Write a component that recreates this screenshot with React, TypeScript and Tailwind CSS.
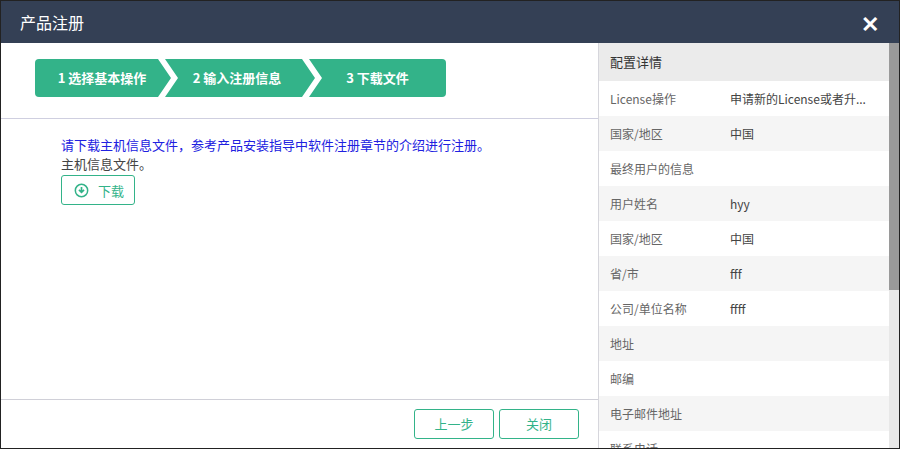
import React from "react";

const rows: [string, string][] = [
  ["License操作", "申请新的License或者升..."],
  ["国家/地区", "中国"],
  ["最终用户的信息", ""],
  ["用户姓名", "hyy"],
  ["国家/地区", "中国"],
  ["省/市", "fff"],
  ["公司/单位名称", "ffff"],
  ["地址", ""],
  ["邮编", ""],
  ["电子邮件地址", ""],
  ["联系电话", ""],
];

const Chevron = ({ left }: { left: number }) => (
  <svg className="absolute top-0" style={{ left }} width="26" height="38" viewBox="0 0 26 38">
    <polygon points="0,0 7,0 20,19 7,38 0,38 13,19" fill="white" />
  </svg>
);

export default function App() {
  return (
    <div
      className="w-[900px] h-[449px] border border-[#222] bg-white flex flex-col overflow-hidden"
      style={{ fontFamily: '"Microsoft YaHei","Noto Sans CJK SC",sans-serif' }}
    >
      <div className="h-[42px] bg-[#344055] flex items-center justify-between pl-[19px] pr-[20px] shrink-0">
        <span className="text-white text-[16px]">产品注册</span>
        <span className="text-white text-[22px] font-bold leading-none">✕</span>
      </div>
      <div className="flex flex-1 min-h-0">
        <div className="w-[598px] border-r border-[#d6d6dc] flex flex-col">
          <div className="h-[76px] border-b border-[#cfcfe0] pt-[16px] pl-[34px]">
            <div className="relative w-[411px] h-[38px] rounded-[4px] bg-[#33b389] flex text-white text-[13px] font-bold">
              <div className="w-[130px] flex items-center justify-center pl-[4px]">1 选择基本操作</div>
              <div className="w-[144px] flex items-center justify-center">2 输入注册信息</div>
              <div className="flex-1 flex items-center justify-center">3 下载文件</div>
              <Chevron left={123} />
              <Chevron left={267} />
            </div>
          </div>
          <div className="flex-1 pl-[60px] pt-[16px] text-[13px] leading-[19px]">
            <div className="text-[#2020e0]">请下载主机信息文件，参考产品安装指导中软件注册章节的介绍进行注册。</div>
            <div className="text-[#444]">主机信息文件。</div>
            <button className="mt-[2px] w-[74px] h-[30px] border border-[#33b389] rounded-[3px] flex items-center gap-[9px] pl-[12px] text-[#33b389] text-[13px]">
              <svg width="15" height="15" viewBox="0 0 16 16">
                <circle cx="8" cy="8" r="6.6" fill="none" stroke="#33b389" strokeWidth="1.6" />
                <path d="M8 4.2v5.5M5.3 7.3L8 10l2.7-2.7" fill="none" stroke="#33b389" strokeWidth="1.8" />
              </svg>
              下载
            </button>
          </div>
          <div className="h-[49px] border-t border-[#d0d0d8] flex justify-end items-center gap-[5px] pr-[19px]">
            <button className="w-[80px] h-[30px] border border-[#33b389] rounded-[3px] text-[#33b389] text-[13px]">上一步</button>
            <button className="w-[80px] h-[30px] border border-[#33b389] rounded-[3px] text-[#33b389] text-[13px]">关闭</button>
          </div>
        </div>
        <div className="flex-1 flex min-w-0">
          <div className="flex-1 min-w-0 overflow-hidden">
            <div className="h-[38px] bg-[#ebebeb] flex items-center pl-[11px] text-[13px] text-[#333]">配置详情</div>
            {rows.map(([k, v], i) => (
              <div
                key={i}
                className={`h-[35px] flex items-center pl-[11px] text-[12px] ${i % 2 === 1 ? "bg-[#f5f5f5]" : "bg-white"}`}
              >
                <span className="w-[120px] text-[#666]">{k}</span>
                <span className="text-[#444]">{v}</span>
              </div>
            ))}
          </div>
          <div className="w-[10px] bg-[#e8e8e8] flex flex-col">
            <div className="h-[247px] bg-[#9a9a9a]" />
          </div>
        </div>
      </div>
    </div>
  );
}
